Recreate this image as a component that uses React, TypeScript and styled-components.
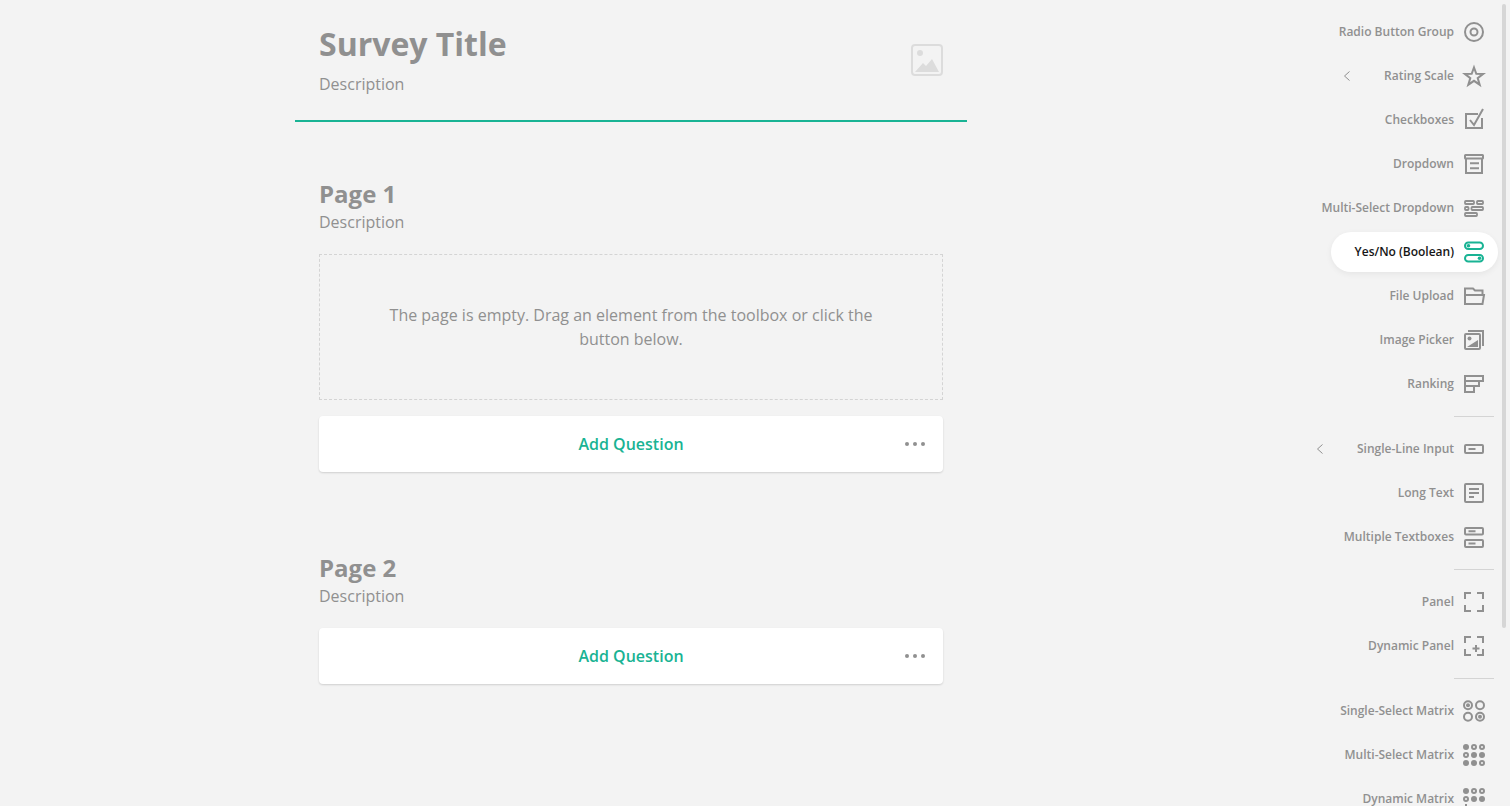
import React from "react";
import styled, { createGlobalStyle } from "styled-components";

const GlobalStyle = createGlobalStyle`
  html, body { margin: 0; padding: 0; height: 100%; overflow: hidden; background: #f3f3f3; }
  * { box-sizing: border-box; }
  body { font-family: "Open Sans", "Liberation Sans", sans-serif; color: #909090; }
`;

const Shell = styled.div`
  display: flex;
  height: 806px;
  overflow: hidden;
  background: #f3f3f3;
`;

const Canvas = styled.main`
  flex: 1;
  display: flex;
  justify-content: center;
  min-width: 0;
`;

const Survey = styled.div`
  width: 672px;
`;

const SurveyHeader = styled.header`
  display: flex;
  justify-content: space-between;
  align-items: flex-start;
  height: 122px;
  padding: 24px 24px 0;
  border-bottom: 2px solid #19b394;
`;

const SurveyTitle = styled.h1`
  margin: 0;
  font-size: 32px;
  line-height: 40px;
  font-weight: 700;
  color: #909090;
`;

const SurveyDescription = styled.p`
  margin: 8px 0 0;
  font-size: 16px;
  line-height: 24px;
  color: #909090;
`;

const LogoSlot = styled.div`
  width: 32px;
  height: 32px;
  margin-top: 20px;
  color: #dcdcdc;
  svg { display: block; }
`;

const PageSection = styled.section<{ $first?: boolean }>`
  padding: ${(p) => (p.$first ? "56px" : "80px")} 24px 0;
`;

const PageTitle = styled.h2`
  margin: 0;
  font-size: 24px;
  line-height: 32px;
  font-weight: 700;
  color: #909090;
`;

const PageDescription = styled.p`
  margin: 0 0 20px;
  font-size: 16px;
  line-height: 24px;
  color: #909090;
`;

const EmptyBox = styled.div`
  border: 1px dashed #d4d4d4;
  padding: 48px 64px;
  margin-bottom: 16px;
  font-size: 16px;
  line-height: 24px;
  text-align: center;
  color: #909090;
`;

const AddBar = styled.div`
  display: grid;
  grid-template-columns: 56px 1fr 56px;
  align-items: center;
  height: 56px;
  background: #fff;
  border-radius: 4px;
  box-shadow: 0 1px 2px rgba(0, 0, 0, 0.15);
`;

const AddLabel = styled.span`
  grid-column: 2;
  text-align: center;
  font-size: 16px;
  line-height: 24px;
  font-weight: 600;
  color: #19b394;
`;

const Dots = styled.span`
  display: flex;
  justify-content: center;
  gap: 4px;
`;

const Dot = styled.i`
  width: 4px;
  height: 4px;
  border-radius: 50%;
  background: #909090;
`;

const Toolbox = styled.aside`
  position: relative;
  flex: none;
  width: 248px;
  height: 806px;
  padding: 12px 12px 0 0;
  overflow: hidden;
  display: flex;
  flex-direction: column;
  align-items: flex-end;
  gap: 4px;
`;

const ScrollThumb = styled.div`
  position: absolute;
  top: 4px;
  right: 4px;
  width: 4px;
  height: 624px;
  border-radius: 2px;
  background: #d6d6d6;
`;

const Item = styled.div<{ $active?: boolean }>`
  flex: none;
  display: flex;
  align-items: center;
  height: 40px;
  padding: 0 12px 0 24px;
  border-radius: 20px;
  background: ${(p) => (p.$active ? "#fff" : "transparent")};
  box-shadow: ${(p) => (p.$active ? "0 2px 6px rgba(0,0,0,0.06)" : "none")};
  color: ${(p) => (p.$active ? "#161616" : "#909090")};
  svg { display: block; color: ${(p) => (p.$active ? "#19b394" : "#909090")}; }
`;

const ItemLabel = styled.span`
  font-size: 12px;
  line-height: 16px;
  font-weight: 600;
  margin-right: 8px;
  white-space: nowrap;
`;

const Chevron = styled.span`
  width: 16px;
  height: 16px;
  margin-right: 29px;
  svg { color: #909090; }
`;

const Divider = styled.hr`
  flex: none;
  width: 40px;
  height: 1px;
  margin: 8px 4px 8px 0;
  border: 0;
  background: #d4d4d4;
`;

const Svg: React.FC<{ children: React.ReactNode }> = ({ children }) => (
  <svg width="24" height="24" viewBox="0 0 24 24" fill="none" stroke="currentColor" strokeWidth="2">
    {children}
  </svg>
);

const Solid: React.FC<{ cx: number; cy: number; r?: number }> = ({ cx, cy, r = 3 }) => (
  <circle cx={cx} cy={cy} r={r} fill="currentColor" stroke="none" />
);
const Ring: React.FC<{ cx: number; cy: number }> = ({ cx, cy }) => (
  <circle cx={cx} cy={cy} r={2} strokeWidth="2" />
);

const icons: Record<string, React.ReactNode> = {
  radio: (
    <Svg>
      <circle cx="12" cy="12" r="9" />
      <circle cx="12" cy="12" r="3.500" />
    </Svg>
  ),
  star: (
    <Svg>
      <path d="M12 3.500l2.300 6.300 6.900.1-5.500 4.200 2 6.600-5.700-3.900-5.700 3.900 2-6.600-5.500-4.200 6.900-.1z" />
    </Svg>
  ),
  check: (
    <Svg>
      <path d="M16 6H4v14h16V10" />
      <path d="M8 12l4 5L21 1" />
    </Svg>
  ),
  dropdown: (
    <Svg>
      <rect x="3" y="3" width="18" height="3.400" rx=".5" />
      <path d="M4 6v15h16V6M8 11.300h9M8 16.300h9" />
    </Svg>
  ),
  multi: (
    <Svg>
      <g strokeWidth="1.800">
        <rect x="3" y="5" width="9" height="3" rx=".8" />
        <rect x="15" y="5" width="6" height="3" rx=".8" />
        <rect x="3" y="11" width="3.500" height="3" rx=".8" />
        <rect x="9.500" y="11" width="11.500" height="3" rx=".8" />
        <rect x="3" y="17" width="12" height="3" rx=".8" />
      </g>
    </Svg>
  ),
  bool: (
    <Svg>
      <rect x="3" y="2.500" width="18" height="6.500" rx="3.250" />
      <rect x="3" y="15" width="18" height="6.500" rx="3.250" />
      <Solid cx={6.500} cy={5.750} r={1.800} />
      <Solid cx={17.500} cy={18.250} r={1.800} />
    </Svg>
  ),
  file: (
    <Svg>
      <path d="M3 20V4.500h8l2 2h7.500V11M3 20h17.500l1.500-9H3z" />
    </Svg>
  ),
  image: (
    <Svg>
      <rect x="3" y="6" width="15" height="15" rx="1" />
      <path d="M6 3h15v15" />
      <Solid cx={7.500} cy={10.500} r={2} />
      <path d="M5 19l11-7v7z" fill="currentColor" stroke="none" />
    </Svg>
  ),
  ranking: (
    <Svg>
      <path d="M3 4h18v5H3zM3 9h14v5H3zM3 14h9v6H3z" />
    </Svg>
  ),
  input: (
    <Svg>
      <rect x="3" y="8" width="18" height="8" rx="1" />
      <path d="M6.500 12h7" />
    </Svg>
  ),
  text: (
    <Svg>
      <rect x="3" y="3" width="18" height="18" rx="1" />
      <path d="M7 8h10M7 12h10M7 16h5" />
    </Svg>
  ),
  texts: (
    <Svg>
      <rect x="3" y="3" width="18" height="6.500" rx="1" />
      <rect x="3" y="15" width="18" height="7" rx="1" />
      <path d="M6.500 6.200h7M6.500 18.500h7" />
    </Svg>
  ),
  panel: (
    <Svg>
      <path d="M9 3H3v6M15 3h6v6M3 15v6h6M21 15v6h-6" />
    </Svg>
  ),
  dynpanel: (
    <Svg>
      <path d="M9 3H3v6M15 3h6v6M3 15v6h6M21 15v6h-6M14 11v7M10.500 14.500h7" />
    </Svg>
  ),
  single: (
    <Svg>
      <circle cx="6" cy="6.300" r="4" />
      <circle cx="18" cy="6.300" r="4" />
      <circle cx="6" cy="17.700" r="4" />
      <circle cx="18" cy="17.700" r="4" />
      <Solid cx={6} cy={6.300} r={2} />
      <Solid cx={18} cy={17.700} r={2} />
    </Svg>
  ),
  matrix: (
    <Svg>
      <Solid cx={4} cy={4} />
      <Ring cx={12} cy={4} />
      <Ring cx={20} cy={4} />
      <Ring cx={4} cy={12} />
      <Solid cx={12} cy={12} />
      <Solid cx={20} cy={12} />
      <Solid cx={4} cy={20} />
      <Solid cx={12} cy={20} />
      <Ring cx={20} cy={20} />
    </Svg>
  ),
  dynmatrix: (
    <Svg>
      <Solid cx={4} cy={4} />
      <Ring cx={12} cy={4} />
      <Ring cx={20} cy={4} />
      <Ring cx={4} cy={12} />
      <Solid cx={12} cy={12} />
      <Solid cx={20} cy={12} />
      <path d="M4 17v6M1 20h6" />
    </Svg>
  ),
};

type Row = { label: string; icon: string; active?: boolean; more?: boolean } | "divider";

const rows: Row[] = [
  { label: "Radio Button Group", icon: "radio" },
  { label: "Rating Scale", icon: "star", more: true },
  { label: "Checkboxes", icon: "check" },
  { label: "Dropdown", icon: "dropdown" },
  { label: "Multi-Select Dropdown", icon: "multi" },
  { label: "Yes/No (Boolean)", icon: "bool", active: true },
  { label: "File Upload", icon: "file" },
  { label: "Image Picker", icon: "image" },
  { label: "Ranking", icon: "ranking" },
  "divider",
  { label: "Single-Line Input", icon: "input", more: true },
  { label: "Long Text", icon: "text" },
  { label: "Multiple Textboxes", icon: "texts" },
  "divider",
  { label: "Panel", icon: "panel" },
  { label: "Dynamic Panel", icon: "dynpanel" },
  "divider",
  { label: "Single-Select Matrix", icon: "single" },
  { label: "Multi-Select Matrix", icon: "matrix" },
  { label: "Dynamic Matrix", icon: "dynmatrix" },
];

const AddQuestion = () => (
  <AddBar>
    <AddLabel>Add Question</AddLabel>
    <Dots>
      <Dot />
      <Dot />
      <Dot />
    </Dots>
  </AddBar>
);

export default function App() {
  return (
    <Shell>
      <GlobalStyle />
      <Canvas>
        <Survey>
          <SurveyHeader>
            <div>
              <SurveyTitle>Survey Title</SurveyTitle>
              <SurveyDescription>Description</SurveyDescription>
            </div>
            <LogoSlot>
              <svg width="32" height="32" viewBox="0 0 32 32" fill="currentColor">
                <rect x="1" y="1" width="30" height="30" rx="3" fill="none" stroke="currentColor" strokeWidth="2" />
                <circle cx="9" cy="9" r="3" />
                <path d="M4 28l8-9 3 3 6-7 7 13z" />
              </svg>
            </LogoSlot>
          </SurveyHeader>
          <PageSection $first>
            <PageTitle>Page 1</PageTitle>
            <PageDescription>Description</PageDescription>
            <EmptyBox>The page is empty. Drag an element from the toolbox or click the button below.</EmptyBox>
            <AddQuestion />
          </PageSection>
          <PageSection>
            <PageTitle>Page 2</PageTitle>
            <PageDescription>Description</PageDescription>
            <AddQuestion />
          </PageSection>
        </Survey>
      </Canvas>
      <Toolbox>
        {rows.map((row, i) =>
          row === "divider" ? (
            <Divider key={i} />
          ) : (
            <Item key={row.label} $active={row.active}>
              {row.more && (
                <Chevron>
                  <svg width="16" height="16" viewBox="0 0 16 16" fill="none" stroke="currentColor" strokeWidth="1">
                    <path d="M10.500 3.500L5.500 8l5 4.500" />
                  </svg>
                </Chevron>
              )}
              <ItemLabel>{row.label}</ItemLabel>
              {icons[row.icon]}
            </Item>
          )
        )}
        <ScrollThumb />
      </Toolbox>
    </Shell>
  );
}
